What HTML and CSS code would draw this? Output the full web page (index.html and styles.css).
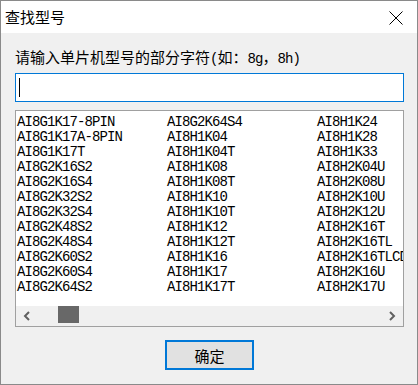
FILE: index.html
```html
<!DOCTYPE html>
<html lang="zh-CN">
<head>
<meta charset="utf-8">
<title>查找型号</title>
<link rel="stylesheet" href="styles.css">
</head>
<body>
<div class="window">
  <div class="titlebar">
    <span class="title">查找型号</span>
    <svg class="close" width="14" height="14" viewBox="0 0 14 14"><path d="M0.5 0.5 L13.5 13.5 M13.5 0.5 L0.5 13.5" stroke="#000" stroke-width="1" fill="none"/></svg>
  </div>
  <div class="content">
    <div class="label">请输入单片机型号的部分字符<span class="asc">(</span>如：<span class="asc">8g</span>，<span class="asc">8h)</span></div>
    <div class="input"><span class="caret"></span></div>
    <div class="listbox">
      <div class="items">
        <div class="item">AI8G1K17-8PIN</div>
        <div class="item">AI8G1K17A-8PIN</div>
        <div class="item">AI8G1K17T</div>
        <div class="item">AI8G2K16S2</div>
        <div class="item">AI8G2K16S4</div>
        <div class="item">AI8G2K32S2</div>
        <div class="item">AI8G2K32S4</div>
        <div class="item">AI8G2K48S2</div>
        <div class="item">AI8G2K48S4</div>
        <div class="item">AI8G2K60S2</div>
        <div class="item">AI8G2K60S4</div>
        <div class="item">AI8G2K64S2</div>
        <div class="item">AI8G2K64S4</div>
        <div class="item">AI8H1K04</div>
        <div class="item">AI8H1K04T</div>
        <div class="item">AI8H1K08</div>
        <div class="item">AI8H1K08T</div>
        <div class="item">AI8H1K10</div>
        <div class="item">AI8H1K10T</div>
        <div class="item">AI8H1K12</div>
        <div class="item">AI8H1K12T</div>
        <div class="item">AI8H1K16</div>
        <div class="item">AI8H1K17</div>
        <div class="item">AI8H1K17T</div>
        <div class="item">AI8H1K24</div>
        <div class="item">AI8H1K28</div>
        <div class="item">AI8H1K33</div>
        <div class="item">AI8H2K04U</div>
        <div class="item">AI8H2K08U</div>
        <div class="item">AI8H2K10U</div>
        <div class="item">AI8H2K12U</div>
        <div class="item">AI8H2K16T</div>
        <div class="item">AI8H2K16TL</div>
        <div class="item">AI8H2K16TLCD</div>
        <div class="item">AI8H2K16U</div>
        <div class="item">AI8H2K17U</div>
      </div>
      <div class="hscroll">
        <div class="arrow"><svg width="8" height="10" viewBox="0 0 8 10"><path d="M6 1 L2 5 L6 9" stroke="#606060" stroke-width="2" fill="none"/></svg></div>
        <div class="track"><div class="thumb"></div></div>
        <div class="arrow"><svg width="8" height="10" viewBox="0 0 8 10"><path d="M2 1 L6 5 L2 9" stroke="#606060" stroke-width="2" fill="none"/></svg></div>
      </div>
    </div>
    <div class="actions">
      <div class="button">确定</div>
    </div>
  </div>
</div>
</body>
</html>
```

FILE: styles.css
```css
* { box-sizing: border-box; }
html, body { margin: 0; padding: 0; background: #f0f0f0; }
body { font-family: "Noto Sans CJK SC", "Liberation Sans", sans-serif; }
.window {
  width: 418px;
  height: 385px;
  border: 1px solid #8a8a8a;
  background: #f0f0f0;
  display: flex;
  flex-direction: column;
}
.titlebar {
  height: 32px;
  background: #fff;
  display: flex;
  align-items: center;
  justify-content: space-between;
  padding: 0 14px 0 4px;
  flex: none;
}
.title { font-size: 15px; line-height: 18px; color: #000; }
.close { display: block; margin-top: 1px; }
.content {
  padding: 15px 13px 0 14px;
  display: flex;
  flex-direction: column;
}
.label {
  font-size: 15px;
  line-height: 18px;
  height: 18px;
  color: #000;
  white-space: nowrap;
}
.asc {
  font-family: "Liberation Mono", monospace;
  font-size: 14px;
  letter-spacing: -0.9px;
}
.input {
  margin-top: 7px;
  height: 29px;
  background: #fff;
  border: 1px solid #0078d7;
  padding: 4px 3px;
}
.caret {
  display: block;
  width: 1px;
  height: 19px;
  background: #000;
}
.listbox {
  margin-top: 8px;
  height: 217px;
  background: #fff;
  border: 1px solid #a0a0a0;
  display: flex;
  flex-direction: column;
  overflow: hidden;
}
.items {
  flex: 1;
  padding: 4px 0 0 1px;
  display: grid;
  grid-auto-flow: column;
  grid-template-rows: repeat(12, 15px);
  grid-auto-columns: 150px;
  overflow: hidden;
  font-family: "Liberation Mono", monospace;
  font-size: 14px;
  letter-spacing: -0.9px;
  color: #000;
}
.item { line-height: 15px; white-space: nowrap; }
.hscroll {
  height: 20px;
  background: #f0f0f0;
  display: flex;
  flex: none;
}
.arrow {
  width: 22px;
  display: flex;
  align-items: center;
  justify-content: center;
}
.arrow svg { display: block; }
.track { flex: 1; }
.thumb {
  width: 21px;
  height: 17px;
  margin-left: 20px;
  background: #686868;
}
.actions {
  margin-top: 13px;
  display: flex;
  justify-content: center;
}
.button {
  width: 89px;
  height: 30px;
  border: 2px solid #0078d7;
  background: #e1e1e1;
  font-size: 15px;
  display: flex;
  align-items: center;
  justify-content: center;
  color: #000;
}
```
